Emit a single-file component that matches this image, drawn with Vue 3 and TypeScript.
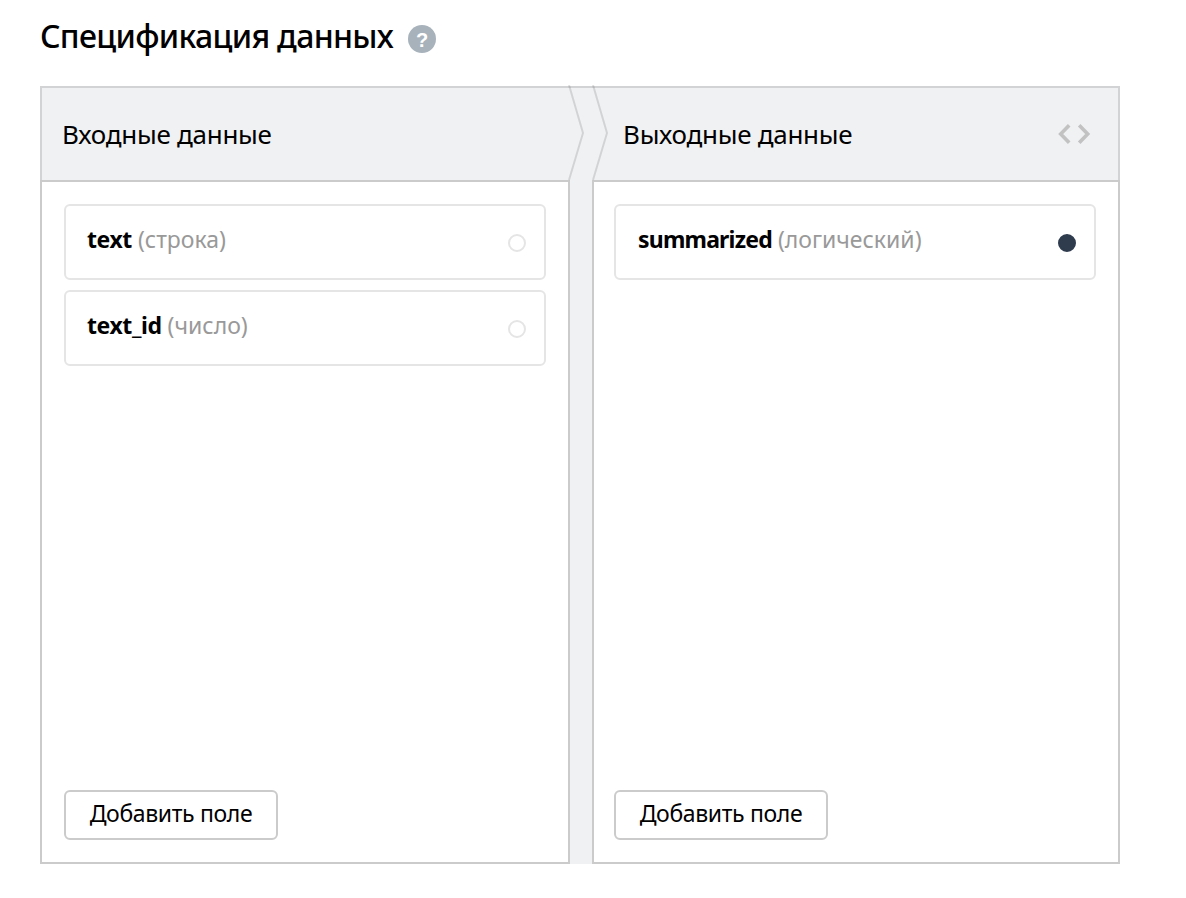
<script setup lang="ts">
interface Field {
  name: string
  type: string
  required: boolean
}

interface Column {
  id: string
  fields: Field[]
}

const columns: Column[] = [
  {
    id: 'input',
    fields: [
      { name: 'text', type: 'строка', required: false },
      { name: 'text_id', type: 'число', required: false },
    ],
  },
  {
    id: 'output',
    fields: [{ name: 'summarized', type: 'логический', required: true }],
  },
]
</script>

<template>
  <main class="page">
    <div class="title-row">
      <h1 class="title">Спецификация данных</h1>
      <span class="help">?</span>
    </div>

    <section class="spec">
      <header class="head">
        <h2 class="head-title head-input">Входные данные</h2>
        <h2 class="head-title head-output">Выходные данные</h2>
        <svg class="code" width="34" height="22" viewBox="0 0 34 22" fill="none" stroke="#c2c2c3" stroke-width="3.6">
          <path d="M12.2 2.2 3.7 11l8.5 8.8M22.2 2.2l8.5 8.8-8.5 8.8" />
        </svg>
        <svg class="chevrons" width="42" height="98" viewBox="0 0 42 98" fill="none" stroke="#000" stroke-opacity=".12" stroke-width="2">
          <path d="M1 0 15 48 1 95M25 0l14 48-14 47" />
        </svg>
      </header>

      <div class="columns">
        <div v-for="column in columns" :key="column.id" class="column" :class="column.id">
          <ul class="fields">
            <li v-for="field in column.fields" :key="field.name" class="field">
              <span class="label">
                <b class="name">{{ field.name }}</b>
                <span class="type">({{ field.type }})</span>
              </span>
              <span class="dot" :class="{ filled: field.required }"></span>
            </li>
          </ul>
          <button class="add" type="button">Добавить поле</button>
        </div>
      </div>
    </section>
  </main>
</template>

<style>
body {
  background: #fff;
}
</style>

<style scoped>
.page {
  box-sizing: border-box;
  width: 1186px;
  height: 898px;
  padding: 15px 66px 0 40px;
  font-family: "Noto Sans", "Open Sans", sans-serif;
  color: #000;
}
.title-row {
  display: flex;
  height: 71px;
}
.title {
  margin: 0;
  width: 368px;
  font-size: 32px;
  line-height: 42px;
  font-weight: 550;
  letter-spacing: -0.68px;
  white-space: nowrap;
}
.help {
  width: 28px;
  height: 28px;
  margin-top: 10px;
  border-radius: 50%;
  background: #a8b2bb;
  color: #fff;
  font: 700 20px/30px "Liberation Sans", sans-serif;
  text-align: center;
}
.spec {
  width: 1080px;
  height: 778px;
  background: #f0f1f3;
}
.head {
  position: relative;
  box-sizing: border-box;
  display: flex;
  align-items: center;
  height: 94px;
  padding: 0 27px 0 20px;
  border: 2px solid #d1d3d4;
  border-bottom: 0;
}
.head-title {
  margin: 0;
  font-size: 26px;
  line-height: 36px;
  font-weight: 400;
  letter-spacing: -0.27px;
  white-space: nowrap;
}
.head-input {
  width: 561px;
}
.code {
  margin-left: auto;
}
.chevrons {
  position: absolute;
  left: 526px;
  top: -3px;
}
.columns {
  display: flex;
  justify-content: space-between;
  height: 684px;
}
.column {
  box-sizing: border-box;
  display: flex;
  flex-direction: column;
  justify-content: space-between;
  align-items: flex-start;
  padding: 22px;
  border: 2px solid #cbcbcb;
  background: #fff;
}
.input {
  width: 530px;
}
.output {
  width: 528px;
  padding-left: 20px;
}
.fields {
  display: flex;
  flex-direction: column;
  gap: 10px;
  width: 482px;
  margin: 0;
  padding: 0;
  list-style: none;
}
.field {
  box-sizing: border-box;
  display: flex;
  justify-content: space-between;
  align-items: center;
  height: 76px;
  padding: 0 18px 0 22px;
  border: 2px solid #e5e5e5;
  border-radius: 6px;
}
.label {
  display: flex;
  margin-bottom: 6px;
  font-size: 23px;
  line-height: 32px;
  white-space: nowrap;
}
.name {
  margin-left: -1px;
  letter-spacing: -0.4px;
}
.output .name {
  margin-left: 0;
  letter-spacing: -0.8px;
}
.type {
  margin-left: 6px;
  color: #999;
}
.dot {
  box-sizing: border-box;
  width: 18px;
  height: 18px;
  margin-top: 2px;
  border: 2px solid #e5e5e5;
  border-radius: 50%;
}
.filled {
  border-color: #2f3c4e;
  background: #2f3c4e;
}
.add {
  box-sizing: border-box;
  width: 214px;
  height: 50px;
  padding: 0 0 4px;
  border: 2px solid #cbcbcb;
  border-radius: 6px;
  background: #fff;
  color: #000;
  font: 400 23px/32px "Noto Sans", "Open Sans", sans-serif;
  letter-spacing: -0.35px;
  white-space: nowrap;
}
</style>
